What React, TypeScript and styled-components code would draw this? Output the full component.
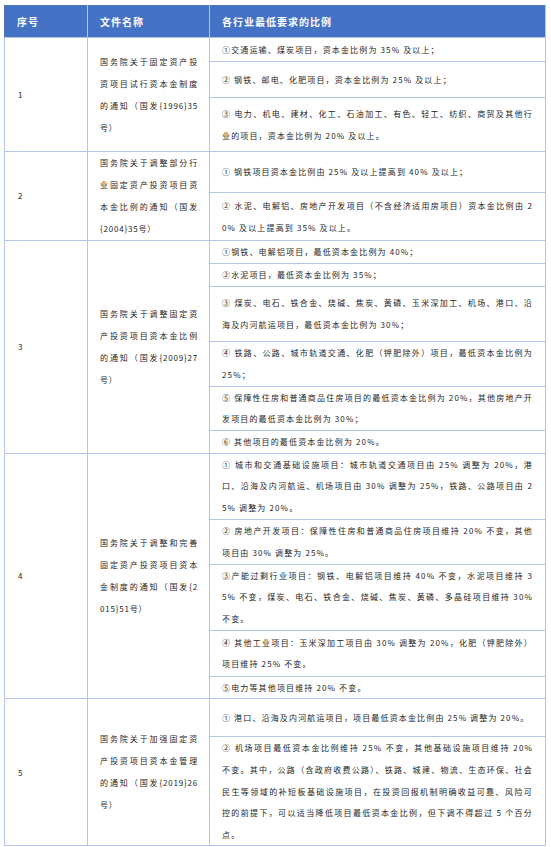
import React from "react";
import styled, { createGlobalStyle } from "styled-components";

type Item = { h: number; lines: string[] };
type Group = { no: string; title: string[]; items: Item[] };

const groups: Group[] = [
  {
    no: "1",
    title: ["国务院关于固定资产投", "资项目试行资本金制度", "的通知（国发{1996}35", "号）"],
    items: [
      { h: 24, lines: ["①交通运输、煤炭项目，资本金比例为 35% 及以上；"] },
      { h: 36, lines: ["② 钢铁、邮电、化肥项目，资本金比例为 25% 及以上；"] },
      {
        h: 54,
        lines: [
          "③ 电力、机电、建材、化工、石油加工、有色、轻工、纺织、商贸及其他行",
          "业的项目，资本金比例为 20% 及以上。",
        ],
      },
    ],
  },
  {
    no: "2",
    title: ["国务院关于调整部分行", "业固定资产投资项目资", "本金比例的通知（国发", "{2004}35号）"],
    items: [
      { h: 41, lines: ["① 钢铁项目资本金比例由 25% 及以上提高到 40% 及以上；"] },
      {
        h: 48,
        lines: [
          "② 水泥、电解铝、房地产开发项目（不含经济适用房项目）资本金比例由 2",
          "0% 及以上提高到 35% 及以上。",
        ],
      },
    ],
  },
  {
    no: "3",
    title: ["国务院关于调整固定资", "产投资项目资本金比例", "的通知（国发{2009}27", "号）"],
    items: [
      { h: 23, lines: ["①钢铁、电解铝项目，最低资本金比例为 40%；"] },
      { h: 22, lines: ["②水泥项目，最低资本金比例为 35%；"] },
      {
        h: 55,
        lines: [
          "③ 煤炭、电石、铁合金、烧碱、焦炭、黄磷、玉米深加工、机场、港口、沿",
          "海及内河航运项目，最低资本金比例为 30%；",
        ],
      },
      {
        h: 45,
        lines: ["④ 铁路、公路、城市轨道交通、化肥（钾肥除外）项目，最低资本金比例为", "25%；"],
      },
      {
        h: 44,
        lines: [
          "⑤ 保障性住房和普通商品住房项目的最低资本金比例为 20%，其他房地产开",
          "发项目的最低资本金比例为 30%；",
        ],
      },
      { h: 23, lines: ["⑥ 其他项目的最低资本金比例为 20%。"] },
    ],
  },
  {
    no: "4",
    title: ["国务院关于调整和完善", "固定资产投资项目资本", "金制度的通知（国发{2", "015}51号）"],
    items: [
      {
        h: 66,
        lines: [
          "① 城市和交通基础设施项目：城市轨道交通项目由 25% 调整为 20%，港",
          "口、沿海及内河航运、机场项目由 30% 调整为 25%，铁路、公路项目由 2",
          "5% 调整为 20%。",
        ],
      },
      {
        h: 45,
        lines: [
          "② 房地产开发项目：保障性住房和普通商品住房项目维持 20% 不变，其他",
          "项目由 30% 调整为 25%。",
        ],
      },
      {
        h: 66,
        lines: [
          "③产能过剩行业项目：钢铁、电解铝项目维持 40% 不变，水泥项目维持 3",
          "5% 不变，煤炭、电石、铁合金、烧碱、焦炭、黄磷、多晶硅项目维持 30%",
          "不变。",
        ],
      },
      {
        h: 46,
        lines: [
          "④ 其他工业项目：玉米深加工项目由 30% 调整为 20%，化肥（钾肥除外）",
          "项目维持 25% 不变。",
        ],
      },
      { h: 22, lines: ["⑤电力等其他项目维持 20% 不变。"] },
    ],
  },
  {
    no: "5",
    title: ["国务院关于加强固定资", "产投资项目资本金管理", "的通知（国发{2019}26", "号）"],
    items: [
      { h: 38, lines: ["① 港口、沿海及内河航运项目，项目最低资本金比例由 25% 调整为 20%。"] },
      {
        h: 108,
        lines: [
          "② 机场项目最低资本金比例维持 25% 不变，其他基础设施项目维持 20%",
          "不变。其中，公路（含政府收费公路）、铁路、城建、物流、生态环保、社会",
          "民生等领域的补短板基础设施项目，在投资回报机制明确收益可靠、风险可",
          "控的前提下，可以适当降低项目最低资本金比例，但下调不得超过 5 个百分",
          "点。",
        ],
      },
    ],
  },
];

const GlobalStyle = createGlobalStyle`
  body {
    margin: 0;
    background: #ffffff;
    font-family: "Noto Sans CJK SC", "Liberation Sans", sans-serif;
  }
  * {
    box-sizing: border-box;
  }
`;

const Page = styled.div`
  padding: 5px 6px 4px 4px;
`;

const Table = styled.table`
  width: 541px;
  border-collapse: collapse;
  table-layout: fixed;
  border: 1px solid #4f74bb;
  color: #262626;
`;

const HeadRow = styled.tr`
  height: 32px;
  background: #4472c4;
`;

const HeadCell = styled.th`
  padding: 0 12px;
  text-align: left;
  color: #ffffff;
  font-size: 10px;
  font-weight: 700;
  letter-spacing: 1px;
  border-right: 1px solid #b4c6e7;
`;

const Row = styled.tr<{ $h: number }>`
  height: ${(p) => p.$h}px;
`;

const Cell = styled.td`
  padding: 0 12px;
  vertical-align: middle;
  border: 1px solid #b4c6e7;
  font-size: 8px;
  letter-spacing: 1.15px;
  line-height: 21.6px;
  overflow: hidden;
`;

const NoCell = styled(Cell)`
  letter-spacing: 0;
  padding-left: 13px;
`;

const TitleCell = styled(Cell)`
  line-height: 22px;
  letter-spacing: 0.8px;
  padding: 0 11px 0 12px;
`;

const Line = styled.span<{ $fill?: boolean }>`
  display: block;
  text-align: left;
  white-space: ${(p) => (p.$fill ? "normal" : "nowrap")};
  text-align-last: ${(p) => (p.$fill ? "justify" : "auto")};
`;

const Lines = ({ lines }: { lines: string[] }) => (
  <>
    {lines.map((l, i) => (
      <Line key={i} $fill={i < lines.length - 1}>
        {l}
      </Line>
    ))}
  </>
);

export default function App() {
  return (
    <Page>
      <GlobalStyle />
      <Table>
        <colgroup>
          <col style={{ width: 83 }} />
          <col style={{ width: 122 }} />
          <col style={{ width: 336 }} />
        </colgroup>
        <thead>
          <HeadRow>
            <HeadCell>序号</HeadCell>
            <HeadCell>文件名称</HeadCell>
            <HeadCell>各行业最低要求的比例</HeadCell>
          </HeadRow>
        </thead>
        <tbody>
          {groups.map((g) =>
            g.items.map((item, i) => (
              <Row key={g.no + "-" + i} $h={item.h}>
                {i === 0 && (
                  <>
                    <NoCell rowSpan={g.items.length}>{g.no}</NoCell>
                    <TitleCell rowSpan={g.items.length}>
                      <Lines lines={g.title} />
                    </TitleCell>
                  </>
                )}
                <Cell>
                  <Lines lines={item.lines} />
                </Cell>
              </Row>
            ))
          )}
        </tbody>
      </Table>
    </Page>
  );
}
